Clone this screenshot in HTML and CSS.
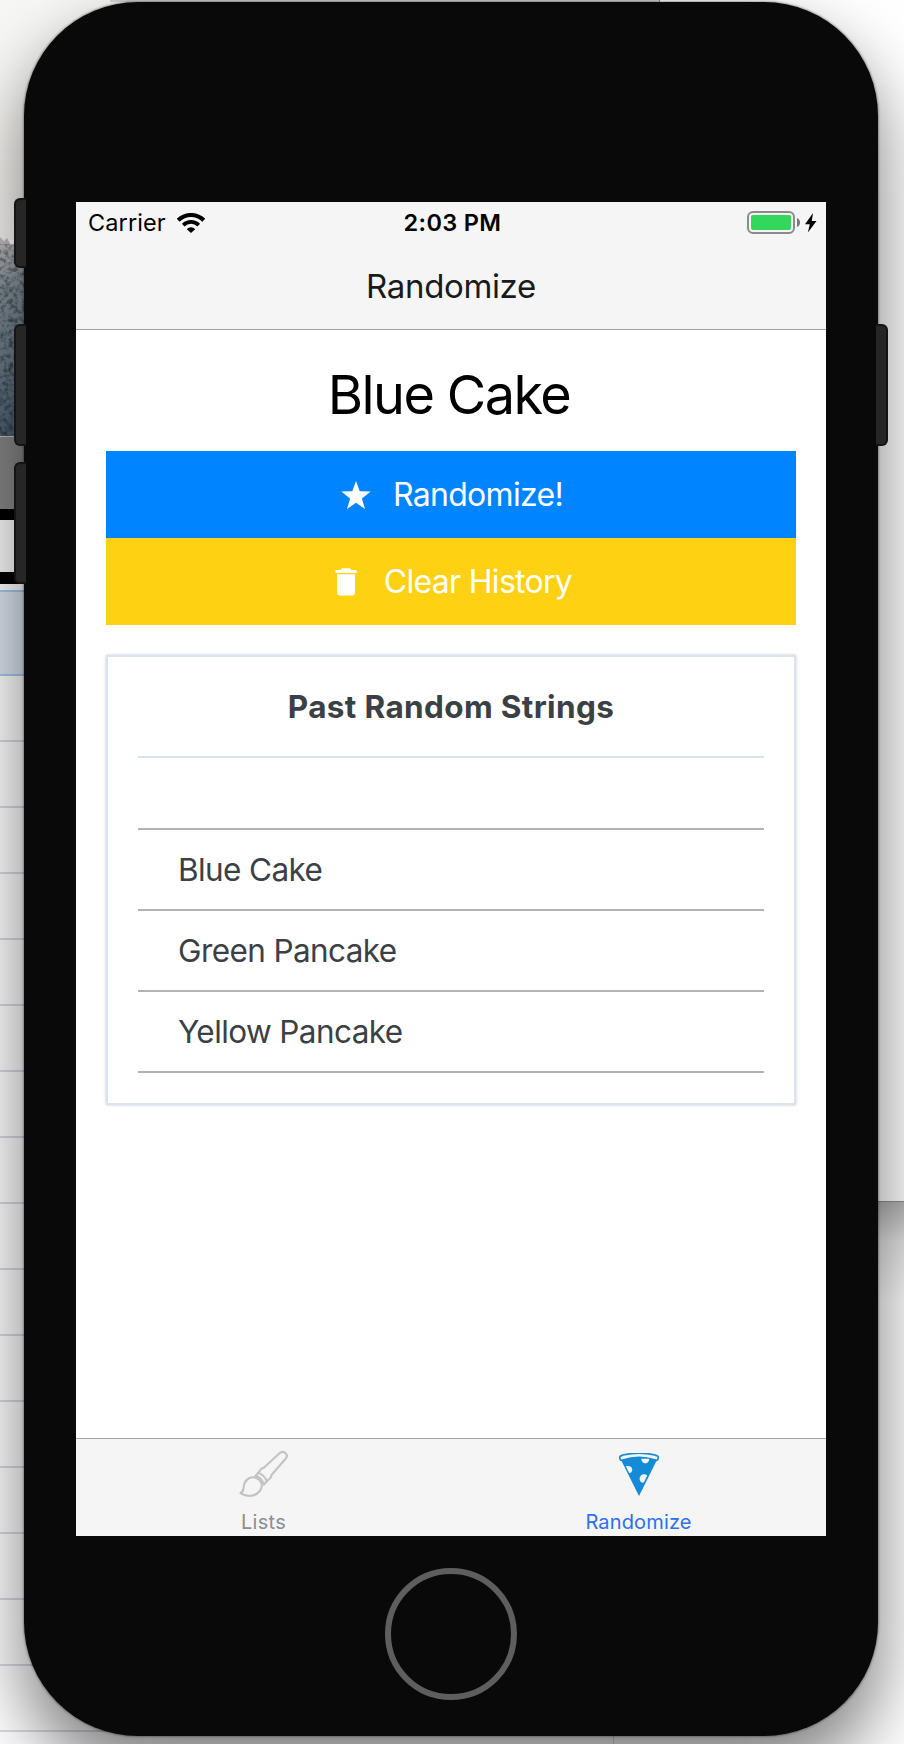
FILE: index.html
```html
<!DOCTYPE html>
<html lang="en">
<head>
<meta charset="utf-8">
<title>Randomize</title>
<link rel="stylesheet" href="styles.css">
</head>
<body>
<div class="desktop">
  <svg class="backdrop" width="904" height="1744" viewBox="0 0 904 1744" aria-hidden="true">
    <defs>
      <linearGradient id="wall" x1="0" y1="0" x2="0" y2="1"><stop offset="0" stop-color="#f7f7f5"/><stop offset="1" stop-color="#f4f3f0"/></linearGradient>
      <linearGradient id="rock" x1="0" y1="0" x2="0" y2="1"><stop offset="0" stop-color="#c4bfc0"/><stop offset=".25" stop-color="#84929b"/><stop offset="1" stop-color="#4b6070"/></linearGradient>
      <linearGradient id="drop" x1="0" y1="0" x2="0" y2="1"><stop offset="0" stop-color="#000" stop-opacity=".3"/><stop offset=".4" stop-color="#000" stop-opacity=".1"/><stop offset="1" stop-color="#000" stop-opacity="0"/></linearGradient>
      <filter id="grain" x="0" y="0" width="1" height="1"><feTurbulence type="fractalNoise" baseFrequency=".22" numOctaves="3" seed="4"/><feColorMatrix values="0 0 0 0 0  0 0 0 0 0  0 0 0 0 0  1.1 0 0 0 -.45"/></filter>
      <pattern id="rows" width="66" height="66" patternUnits="userSpaceOnUse" y="740"><rect width="66" height="2" fill="#dadae0"/></pattern>
    </defs>
    <rect width="904" height="1744" fill="#fff"/>
    <rect width="330" height="240" fill="url(#wall)"/>
    <path d="M0 237l4 4 3-3 4 7 4-2 4 8 5 3v182H0z" fill="url(#rock)"/>
    <rect y="244" width="24" height="192" filter="url(#grain)"/>
    <rect y="436" width="24" height="73" fill="#858585"/>
    <rect y="436" width="24" height="1" fill="#bbb"/>
    <rect y="509" width="24" height="75" fill="#000"/>
    <rect y="520" width="14" height="52" fill="#f8f8f8"/>
    <rect y="590" width="24" height="86" fill="#dde5f0"/>
    <path d="M0 591h24M0 675h24" stroke="#a9c8ef" stroke-width="2"/>
    <rect y="740" width="613" height="1004" fill="url(#rows)"/>
    <path d="M613.500 1736v8" stroke="#d8d8d8"/>
    <rect x="110" width="550" height="2" fill="#d2d4d4"/>
    <rect x="659" width="1" height="2" fill="#888"/>
    <rect x="870" y="1202" width="34" height="100" fill="url(#drop)"/>
    <rect x="870" y="1201" width="34" height="1" fill="#8f8f8f"/>
  </svg>

  <main class="phone">
    <i class="key key-mute"></i>
    <i class="key key-up"></i>
    <i class="key key-down"></i>
    <i class="key key-power"></i>

    <div class="screen">
      <header class="top">
        <div class="status">
          <div class="carrier">
            <span class="carrier-name">Carrier</span>
            <svg width="28" height="20" viewBox="0 0 28 20"><g fill="none" stroke="#000"><path d="M1.200 7.200C8.400.2 19.600.2 26.800 7.200" stroke-width="4"/><path d="M6.200 12.100C10.700 7.900 17.300 7.900 21.800 12.100" stroke-width="3.700"/></g><path d="M9.800 16.300C12 13.400 16 13.400 18.200 16.300L14 20z"/></svg>
          </div>
          <span class="time">2:03 PM</span>
          <div class="power">
            <div class="battery"><div class="charge"></div></div>
            <svg class="nub" width="3" height="9" viewBox="0 0 3 9"><path d="M0 0C4 1.500 4 7.500 0 9z" fill="#777"/></svg>
            <svg class="bolt" width="12" height="20" viewBox="0 0 12 20"><path d="M8 0L0 11.200h4.800L2.900 19.500 11.500 8H6.800z"/></svg>
          </div>
        </div>
        <h1 class="title">Randomize</h1>
      </header>

      <section class="content">
        <h2 class="result"><span>Blue Cake</span></h2>
        <div class="actions">
          <button class="btn btn-blue">
            <svg class="star" width="30" height="28" viewBox="0 0 30 28"><path d="M15 0l3.700 10.300 11 .3-8.800 6.800 3.100 10.500-9-6.200-9 6.200 3.100-10.500L.3 10.600l11-.3z" fill="#fff"/></svg>
            <span class="label-random">Randomize!</span>
          </button>
          <button class="btn btn-yellow">
            <svg class="trash" width="22" height="28" viewBox="0 0 22 28"><path d="M.5 2h5l1.700-1.700h7.600L16.500 2h5v3H.5zM2 6.300h18v18.200a3 3 0 0 1-3 3H5a3 3 0 0 1-3-3z" fill="#fff"/></svg>
            <span class="label-clear">Clear History</span>
          </button>
        </div>
        <div class="card">
          <h3 class="card-title"><span>Past Random Strings</span></h3>
          <ul class="history">
            <li class="row row-empty"></li>
            <li class="row"><span>Blue Cake</span></li>
            <li class="row"><span>Green Pancake</span></li>
            <li class="row"><span>Yellow Pancake</span></li>
          </ul>
        </div>
      </section>

      <nav class="tabs">
        <a class="tab">
          <svg width="50" height="48" viewBox="0 0 50 48"><g fill="none" stroke="#c3c3c3" stroke-width="2.100" stroke-linejoin="round" stroke-linecap="round"><path d="M1.500 43.200C5.500 41 4.200 38 5.100 34.500 6.700 28.500 12.500 26 17.500 28 23 30.300 24.300 36.500 20.800 41 16.500 46.500 7.500 47.500 1.500 43.200z"/><path d="M16.200 26.200C19.500 25.500 24.500 30.500 24.700 34.800L27.800 31.200C26.500 27.500 22.500 23.500 19.200 22.800z"/><path d="M19.200 22.800L22.600 18.400 24.500 18 40.500 3.200C44.500-.3 50 4.500 46.800 8.500L32.300 25.300 32 27.300 27.800 31.200"/></g></svg>
          <span class="tab-lists">Lists</span>
        </a>
        <a class="tab tab-on">
          <svg width="40" height="44" viewBox="0 0 40 44"><path d="M2.300 7.500C13 3.200 27 3.200 37.700 7.500L20 43z" fill="#138bd8"/><path d="M1 6C0 3 2 2.600 4 2 14-.2 26-.2 36 2c2 .6 4 1 3 4-.4 1.300-1.300 1.600-2.600 1.100C26 3.700 14 3.700 3.600 7.100 2.300 7.600 1.400 7.300 1 6z" fill="#f5f5f5" stroke="#138bd8" stroke-width="1.700"/><path d="M22.300 5.800h8C30 12 22.600 12 22.300 5.800z" fill="#f5f5f5"/><path d="M6.800 13.200C15 11.500 14.500 20 10.300 20.200z" fill="#f5f5f5"/><path d="M28.300 22.500C22.500 18.500 18 26 22.300 29.200 24.300 30.500 25.800 28.500 25.300 28.500z" fill="#f5f5f5"/></svg>
          <span class="tab-random">Randomize</span>
        </a>
      </nav>
    </div>

    <div class="home"></div>
  </main>
</div>
</body>
</html>
```
FILE: styles.css
```css
* { box-sizing: border-box; margin: 0; padding: 0; }

body { font-family: Inter, "Liberation Sans", sans-serif; font-weight: 400; }

.desktop { position: relative; width: 904px; height: 1744px; overflow: hidden; }
.backdrop { position: absolute; left: 0; top: 0; }
svg { display: block; flex: none; }
span { white-space: nowrap; }

/* Device body */
.phone {
  position: relative;
  display: flex;
  flex-direction: column;
  align-items: center;
  width: 854px;
  height: 1734px;
  margin: 2px 0 0 24px;
  padding-top: 200px;
  border-radius: 114px;
  background: #090909;
  box-shadow: 0 0 2px 1px rgba(0, 0, 0, .3), 0 36px 70px 2px rgba(0, 0, 0, .5);
}
.desktop::before { content: ""; display: table; }

.key { position: absolute; width: 12px; background: #262626; border: 2px solid #141414; }
.key-mute, .key-up, .key-down { left: -10px; border-right: 0; border-radius: 6px 0 0 6px; }
.key-mute { top: 196px; height: 70px; }
.key-up { top: 322px; height: 122px; }
.key-down { top: 460px; height: 122px; }
.key-power { left: 852px; top: 322px; height: 122px; border-left: 0; border-radius: 0 6px 6px 0; }

.screen { display: flex; flex-direction: column; width: 750px; height: 1334px; background: #fff; }

/* Header */
.top { height: 128px; background: #f5f5f5; border-bottom: 1px solid #a0a0a0; }
.status {
  display: grid;
  grid-template-columns: 1fr auto 1fr;
  align-items: center;
  height: 41px;
  padding: 0 9px 0 12px;
  line-height: 40px;
}
.carrier { display: flex; align-items: center; gap: 11px; }
.carrier-name { font-size: 23.500px; letter-spacing: .1px; }
.time { font-size: 23.500px; font-weight: 600; letter-spacing: .35px; }
.power { display: flex; align-items: center; justify-content: flex-end; }
.battery { width: 48px; height: 23px; padding: 2px; border: 2px solid #8b8b8b; border-radius: 6px; }
.charge { height: 15px; border-radius: 2px; background: #32d75b; }
.nub { margin-left: 2px; }
.bolt { margin-left: 5px; }
.title { font-size: 33px; font-weight: 400; line-height: 44px; margin-top: 21px; text-align: center; letter-spacing: -.35px; color: #1a1a1a; }

/* Content */
.content { flex: 1; padding: 0 30px; }
.result { height: 121px; padding: 29px 4px 0 0; font-size: 54px; font-weight: 400; line-height: 72px; text-align: center; letter-spacing: -1.600px; color: #000; }
.btn {
  display: flex;
  align-items: center;
  justify-content: center;
  width: 100%;
  height: 87px;
  border: 0;
  font: 400 32px/40px Inter, "Liberation Sans", sans-serif;
  letter-spacing: -.7px;
  color: #fff;
}
.btn-blue { padding-left: 2px; background: #0084ff; }
.btn-yellow { padding-left: 5px; background: #fed113; }
.star { margin-right: 22px; }
.trash { margin-right: 27px; }

.card {
  height: 450px;
  margin-top: 30px;
  padding: 0 30px;
  border: 2px solid #dbe4ec;
  box-shadow: 0 0 3px rgba(0, 0, 0, .2);
  color: #3b4045;
}
.card-title { height: 101px; border-bottom: 2px solid #dae4ec; font-size: 31.500px; line-height: 100px; font-weight: 700; letter-spacing: .35px; text-align: center; }
.history { list-style: none; }
.row { height: 81px; padding-left: 40px; border-bottom: 2px solid #b2b2b2; font-size: 31.500px; line-height: 79px; letter-spacing: -.6px; }
.row-empty { height: 72px; }

/* Tab bar */
.tabs { display: grid; grid-template-columns: 1fr 1fr; height: 98px; background: #f5f5f5; border-top: 1px solid #a4a4a4; }
.tab { display: flex; flex-direction: column; align-items: center; justify-content: space-between; padding: 11px 0 1px; font-size: 20px; line-height: 26px; color: #8e8e8e; }
.tab-on { padding-top: 14px; color: #2c6ff0; }
.tab-lists { letter-spacing: .3px; }
.tab-random { letter-spacing: .15px; }

.home { width: 132px; height: 132px; margin-top: 32px; border: 6px solid #5e5e5e; border-radius: 50%; }
```
